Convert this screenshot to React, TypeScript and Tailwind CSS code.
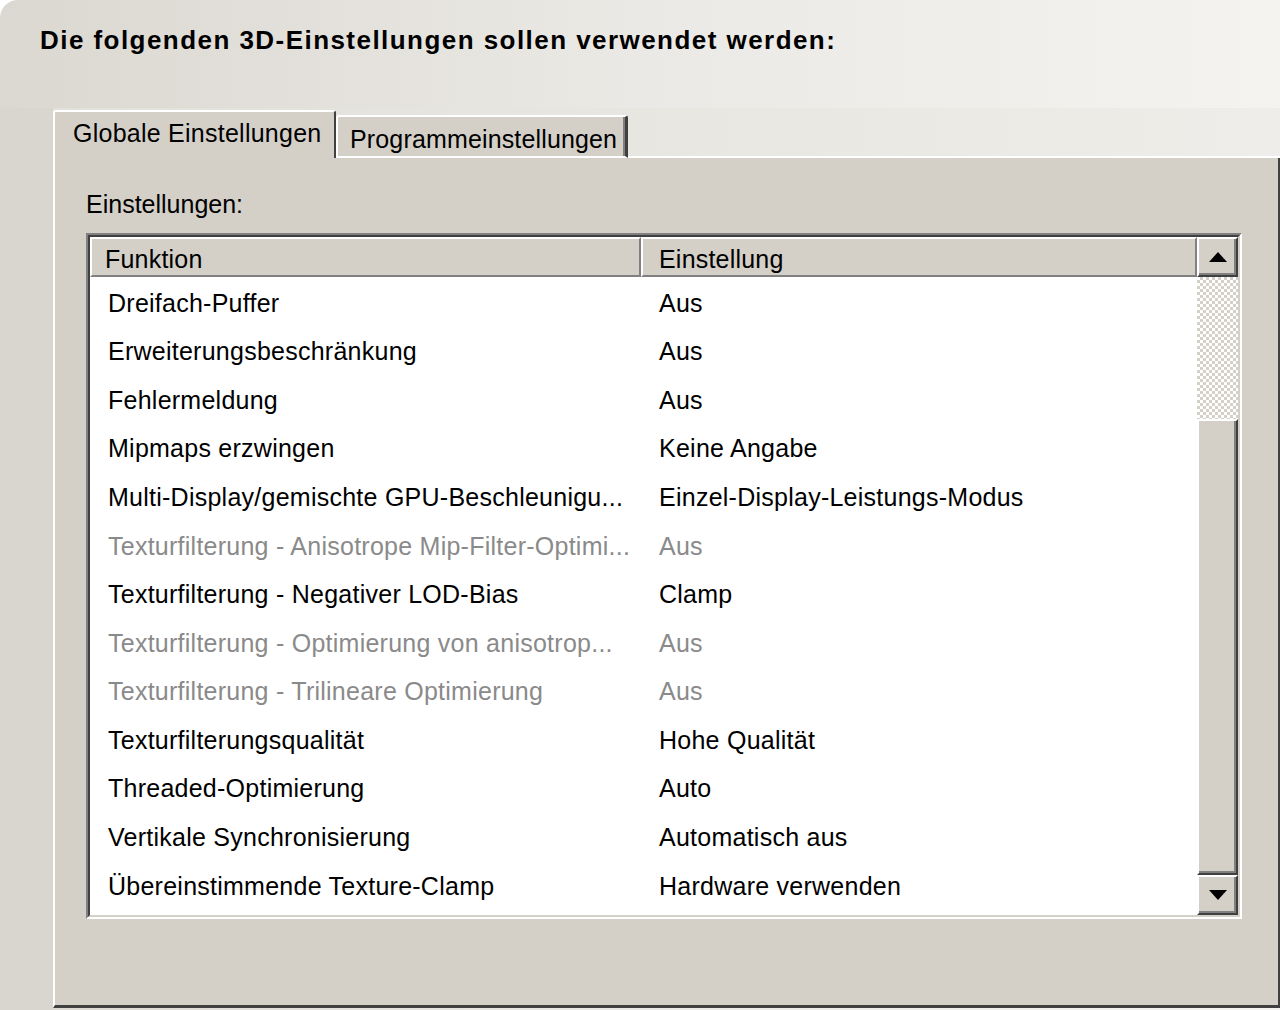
import React from 'react';

type Row = { name: string; value: string; disabled?: boolean };

const rows: Row[] = [
  { name: 'Dreifach-Puffer', value: 'Aus' },
  { name: 'Erweiterungsbeschränkung', value: 'Aus' },
  { name: 'Fehlermeldung', value: 'Aus' },
  { name: 'Mipmaps erzwingen', value: 'Keine Angabe' },
  { name: 'Multi-Display/gemischte GPU-Beschleunigu...', value: 'Einzel-Display-Leistungs-Modus' },
  { name: 'Texturfilterung - Anisotrope Mip-Filter-Optimi...', value: 'Aus', disabled: true },
  { name: 'Texturfilterung - Negativer LOD-Bias', value: 'Clamp' },
  { name: 'Texturfilterung - Optimierung von anisotrop...', value: 'Aus', disabled: true },
  { name: 'Texturfilterung - Trilineare Optimierung', value: 'Aus', disabled: true },
  { name: 'Texturfilterungsqualität', value: 'Hohe Qualität' },
  { name: 'Threaded-Optimierung', value: 'Auto' },
  { name: 'Vertikale Synchronisierung', value: 'Automatisch aus' },
  { name: 'Übereinstimmende Texture-Clamp', value: 'Hardware verwenden' },
];

// raised 3D button look (classic windows)
const raised =
  'bg-[#d4d0c8] border-t-2 border-l-2 border-t-white border-l-white border-b-2 border-r-2 border-b-[#404040] border-r-[#404040] shadow-[inset_-2px_-2px_0_#808080]';

const ScrollArrow = ({ down }: { down?: boolean }) => (
  <svg width="18" height="10" viewBox="0 0 18 10" className={down ? 'rotate-180' : ''}>
    <path d="M9 0 L18 10 L0 10 Z" fill="#000" />
  </svg>
);

export default function App() {
  return (
    <div
      className="w-[1280px] h-[1010px] overflow-hidden bg-white text-black"
      style={{ fontFamily: '"Liberation Sans", Arial, sans-serif' }}
    >
      <div className="h-full flex flex-col rounded-tl-[18px] bg-gradient-to-r from-[#dbd8d1] via-[#ebe9e5] to-[#f4f3f0]">
        {/* Heading */}
        <div className="h-[108px] pl-[40px] pt-[23px]">
          <h1 className="text-[26px] leading-[34px] font-bold tracking-[1.45px]">
            Die folgenden 3D-Einstellungen sollen verwendet werden:
          </h1>
        </div>

        <div className="flex flex-1">
          <div className="w-[53px] bg-[#d9d6cf]" />

          <div className="flex-1 flex flex-col">
            {/* Tab strip */}
            <div className="h-[50px] flex items-end bg-gradient-to-r from-[#e2e0da] to-[#eeede9]">
              <div className="h-[48px] w-[283px] bg-[#d4d0c8] border-t-2 border-l-2 border-white border-r-2 border-r-[#404040] rounded-t-[3px] pl-[18px] pt-[6px]">
                <span className="text-[25px] leading-[30px] tracking-[0.25px]">Globale Einstellungen</span>
              </div>
              <div className="h-[43px] w-[292px] bg-[#d4d0c8] border-t-2 border-l-2 border-white border-r-[3px] border-r-[#404040] border-b-2 border-b-white rounded-t-[3px] pl-[12px] pt-[7px] shadow-[inset_-2px_0_0_#808080]">
                <span className="text-[25px] leading-[30px] tracking-[0.15px]">Programmeinstellungen</span>
              </div>
              <div className="flex-1 h-[2px] bg-white" />
            </div>

            {/* Panel */}
            <div className="flex-1 mb-[2px] bg-[#d4d0c8] border-l-2 border-white border-r-2 border-r-[#404040] border-b-[3px] border-b-[#404040] pl-[31px] pt-[31px]">
              <div className="text-[25px] leading-[30px]">Einstellungen:</div>

              {/* List box */}
              <div className="mt-[14px] w-[1156px] h-[686px] border-t-2 border-l-2 border-[#808080] border-b-2 border-r-2 border-b-white border-r-white">
                <div className="h-full flex border-t-2 border-l-2 border-[#404040] border-b-2 border-r-2 border-b-[#d4d0c8] border-r-[#d4d0c8] bg-white">
                  <div className="flex-1 flex flex-col">
                    {/* Header */}
                    <div className="h-[40px] flex text-[25px] leading-[30px] tracking-[0.2px]">
                      <div className="w-[551px] bg-[#d4d0c8] border-t-2 border-l-2 border-white border-b-2 border-r-2 border-b-[#808080] border-r-[#808080] pl-[13px] pt-[5px]">
                        Funktion
                      </div>
                      <div className="flex-1 bg-[#d4d0c8] border-t-2 border-l-2 border-white border-b-2 border-r-2 border-b-[#808080] border-r-[#808080] pl-[16px] pt-[5px]">
                        Einstellung
                      </div>
                    </div>

                    {/* Rows */}
                    <div className="pt-[2px]">
                      {rows.map((r) => (
                        <div
                          key={r.name}
                          className={`h-[48.6px] flex items-center text-[25px] tracking-[0.25px] whitespace-nowrap ${
                            r.disabled ? 'text-[#8a8a8a]' : 'text-black'
                          }`}
                        >
                          <div className="w-[551px] pl-[18px]">{r.name}</div>
                          <div className="pl-[18px]">{r.value}</div>
                        </div>
                      ))}
                    </div>
                  </div>

                  {/* Scrollbar */}
                  <div className="w-[41px] flex flex-col">
                    <div className={`h-[40px] flex items-center justify-center ${raised}`}>
                      <ScrollArrow />
                    </div>
                    <div className="h-[142px] bg-[repeating-conic-gradient(#d4d0c8_0%_25%,#ffffff_0%_50%)] bg-[length:6px_6px]" />
                    <div className={`h-[456px] ${raised}`} />
                    <div className={`h-[40px] flex items-center justify-center ${raised}`}>
                      <ScrollArrow down />
                    </div>
                  </div>
                </div>
              </div>
            </div>
          </div>
        </div>
      </div>
    </div>
  );
}
